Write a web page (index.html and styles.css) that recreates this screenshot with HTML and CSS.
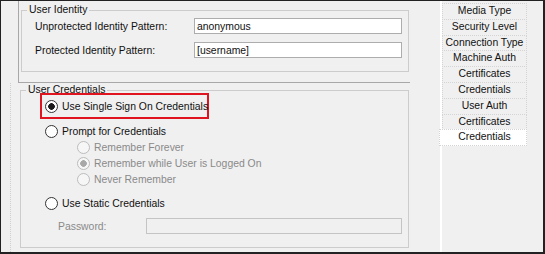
FILE: index.html
```html
<!DOCTYPE html>
<html>
<head>
  <meta charset="UTF-8">
  <title>User Credentials</title>
  <link rel="stylesheet" href="styles.css">
</head>
<body>
  <div class="frame">
    <div class="main">
      <div class="identity-panel">
        <fieldset class="group identity">
          <legend>User Identity</legend>
          <div class="field-row">
            <label>Unprotected Identity Pattern:</label>
            <input class="text-input" type="text" value="anonymous">
          </div>
          <div class="field-row second">
            <label>Protected Identity Pattern:</label>
            <input class="text-input" type="text" value="[username]">
          </div>
        </fieldset>
      </div>

      <div class="cred-panel">
        <fieldset class="group credentials">
          <legend>User Credentials</legend>
          <div class="highlight">
            <label class="radio-row"><input type="radio" name="cred" checked><span>Use Single Sign On Credentials</span></label>
          </div>
          <label class="radio-row prompt"><input type="radio" name="cred"><span>Prompt for Credentials</span></label>
          <label class="radio-row sub"><input type="radio" name="remember" disabled><span>Remember Forever</span></label>
          <label class="radio-row sub"><input type="radio" name="remember" checked disabled><span>Remember while User is Logged On</span></label>
          <label class="radio-row sub"><input type="radio" name="remember" disabled><span>Never Remember</span></label>
          <label class="radio-row static"><input type="radio" name="cred"><span>Use Static Credentials</span></label>
          <div class="password-row">
            <label>Password:</label>
            <input class="text-input" type="password" disabled>
          </div>
        </fieldset>
      </div>
    </div>

    <div class="divider"></div>

    <ul class="nav">
      <li>Media Type</li>
      <li>Security Level</li>
      <li>Connection Type</li>
      <li>Machine Auth</li>
      <li>Certificates</li>
      <li>Credentials</li>
      <li>User Auth</li>
      <li>Certificates</li>
      <li class="active">Credentials</li>
    </ul>
  </div>
</body>
</html>
```

FILE: styles.css
```css
/* Estilos da janela de credenciais */
body {
  margin: 0;
  font-family: "Liberation Sans", Arial, sans-serif;
  font-size: 10.4px;
  color: #111;
  background-color: #f0f0f0;
}
.frame {
  width: 545px;
  height: 254px;
  box-sizing: border-box;
  border-style: solid;
  border-color: #222;
  border-width: 1px 2px 2px 1px;
  background-color: #f0f0f0;
  display: flex;
  white-space: nowrap;
}
.main {
  width: 439px;
  flex-shrink: 0;
}
.identity-panel {
  margin-left: 17px;
  width: 392px;
  height: 82px;
  box-sizing: border-box;
  border-left: 1px solid #a8a8a8;
  border-bottom: 1px solid #a8a8a8;
  overflow: hidden;
}
.group {
  margin: 0;
  padding: 0;
  box-sizing: border-box;
  border: 1px solid #cccccc;
}
.group legend {
  margin-left: 5px;
  padding: 0 2px;
  line-height: 14px;
  color: #111;
}
.identity {
  margin: 2px 0 0 2px;
  width: 388px;
  height: 69px;
}
.field-row {
  display: flex;
  align-items: center;
  padding-left: 13px;
  margin-top: 1px;
}
.field-row.second {
  margin-top: 8px;
}
.field-row label {
  width: 159px;
}
.text-input {
  height: 16px;
  box-sizing: border-box;
  margin: 0;
  padding: 0 2px;
  border: 1px solid #adadad;
  background-color: #fff;
  font-family: inherit;
  font-size: 10.4px;
  color: #111;
  outline: none;
}
.field-row .text-input {
  width: 208px;
}
.cred-panel {
  margin-left: 9px;
  border-left: 1px dotted #cfcfcf;
  height: 169px;
}
.credentials {
  margin-left: 9px;
  width: 389px;
  height: 165px;
}
.highlight {
  margin: -4px 0 0 19px;
  width: 169px;
  height: 26px;
  box-sizing: border-box;
  border: 2px solid #e0141e;
  padding-left: 3px;
  display: flex;
  align-items: center;
}
.radio-row {
  display: flex;
  align-items: center;
  height: 16px;
}
.radio-row input {
  appearance: none;
  -webkit-appearance: none;
  flex-shrink: 0;
  width: 13px;
  height: 13px;
  margin: 0 4px 0 0;
  box-sizing: border-box;
  border: 1px solid #333;
  border-radius: 50%;
  background-color: #fff;
}
.radio-row input:checked {
  background: radial-gradient(circle, #1a1a1a 0, #1a1a1a 3px, #fff 3.6px);
}
.radio-row input:disabled {
  border-color: #bcbcbc;
  background-color: #f6f6f6;
}
.radio-row input:disabled:checked {
  background: radial-gradient(circle, #a8a8a8 0, #a8a8a8 3px, #f6f6f6 3.6px);
}
.prompt,
.static {
  margin-left: 24px;
}
.prompt {
  margin-top: 4px;
}
.static {
  margin-top: 8px;
}
.sub {
  margin-left: 56px;
  color: #8a8a8a;
}
.password-row {
  display: flex;
  align-items: center;
  margin: 7px 0 0 37px;
  color: #8a8a8a;
}
.password-row label {
  width: 88px;
}
.password-row .text-input {
  width: 256px;
  border-color: #c4c4c4;
  background-color: #f0f0f0;
}
.divider {
  width: 2px;
  background-color: #fff;
  flex-shrink: 0;
}
.nav {
  list-style: none;
  margin: 2px 0 0 0;
  padding: 0;
  width: 85px;
}
.nav li {
  height: 16.8px;
  box-sizing: border-box;
  margin-top: -1px;
  border: 1px dotted #d4d4d4;
  text-align: center;
  line-height: 14.8px;
  color: #111;
}
.nav li:first-child {
  margin-top: 0;
}
.nav li.active {
  background-color: #fff;
  margin-left: -3px;
  padding-left: 3px;
}
```
